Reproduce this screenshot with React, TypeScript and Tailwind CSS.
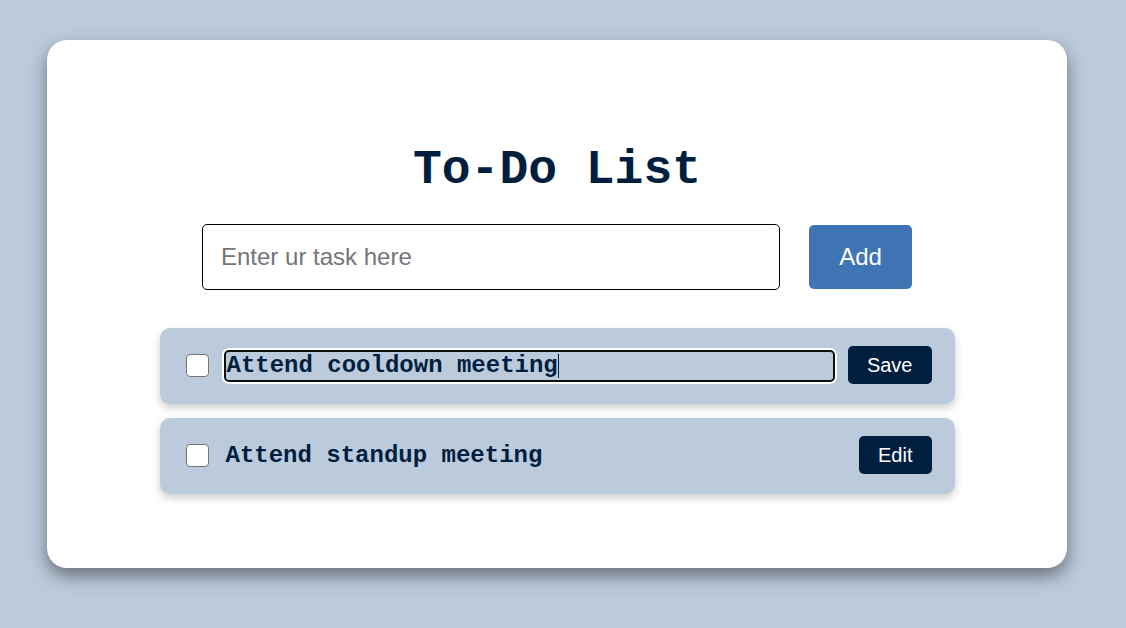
import React from "react";

export default function App() {
  return (
    <div className="min-h-screen w-full bg-[#bccbdc] pt-[40px] pl-[47px] pb-[60px]">
      <div className="w-[1020px] h-[528px] bg-white rounded-[20px] shadow-[0_8px_18px_rgba(0,0,0,0.45)] flex flex-col items-center pt-[103px]">
        <h1
          className="text-[48px] leading-[54px] font-bold text-[#001f3f] m-0"
          style={{ fontFamily: '"Courier New", "Liberation Mono", monospace' }}
        >
          To-Do List
        </h1>
        <div className="flex items-center gap-[29px] mt-[27px]" style={{ fontFamily: '"Liberation Sans", Arial, sans-serif' }}>
          <input
            type="text"
            placeholder="Enter ur task here"
            className="w-[578px] h-[66px] border border-black rounded-[5px] px-[18px] text-[24px] text-black placeholder:text-[#757575] outline-none bg-white"
          />
          <button className="w-[103px] h-[64px] bg-[#3f74b5] text-white text-[24px] rounded-[5px]">
            Add
          </button>
        </div>
        <div className="flex flex-col gap-[14px] mt-[38px] w-[795px]">
          <div className="h-[76px] bg-[#bccbdc] rounded-[10px] shadow-[0_4px_8px_rgba(0,0,0,0.2)] flex items-center pl-[26px] pr-[23px]">
            <div className="w-[23px] h-[23px] shrink-0 rounded-[4px] border-[1.5px] border-[#767676] bg-white mb-[1px]" />
            <div className="flex-1 ml-[17px] mr-[15px] h-[28px] rounded-[3px] shadow-[0_0_0_2px_#101010,0_0_0_4px_#ffffff] flex items-center">
              <span
                className="text-[24px] font-bold text-[#001f3f] leading-none pl-[1px] border-r-[1.5px] border-[#001f3f]"
                style={{ fontFamily: '"Courier New", "Liberation Mono", monospace' }}
              >
                Attend cooldown meeting
              </span>
            </div>
            <button
              className="h-[38px] px-[19px] bg-[#001f3f] text-white text-[20px] rounded-[5px] mb-[2px]"
              style={{ fontFamily: '"Liberation Sans", Arial, sans-serif' }}
            >
              Save
            </button>
          </div>
          <div className="h-[76px] bg-[#bccbdc] rounded-[10px] shadow-[0_4px_8px_rgba(0,0,0,0.2)] flex items-center pl-[26px] pr-[23px]">
            <div className="w-[23px] h-[23px] shrink-0 rounded-[4px] border-[1.5px] border-[#767676] bg-white mb-[1px]" />
            <span
              className="flex-1 ml-[17px] text-[24px] font-bold text-[#001f3f]"
              style={{ fontFamily: '"Courier New", "Liberation Mono", monospace' }}
            >
              Attend standup meeting
            </span>
            <button
              className="h-[38px] px-[19px] bg-[#001f3f] text-white text-[20px] rounded-[5px] mb-[2px]"
              style={{ fontFamily: '"Liberation Sans", Arial, sans-serif' }}
            >
              Edit
            </button>
          </div>
        </div>
      </div>
    </div>
  );
}
